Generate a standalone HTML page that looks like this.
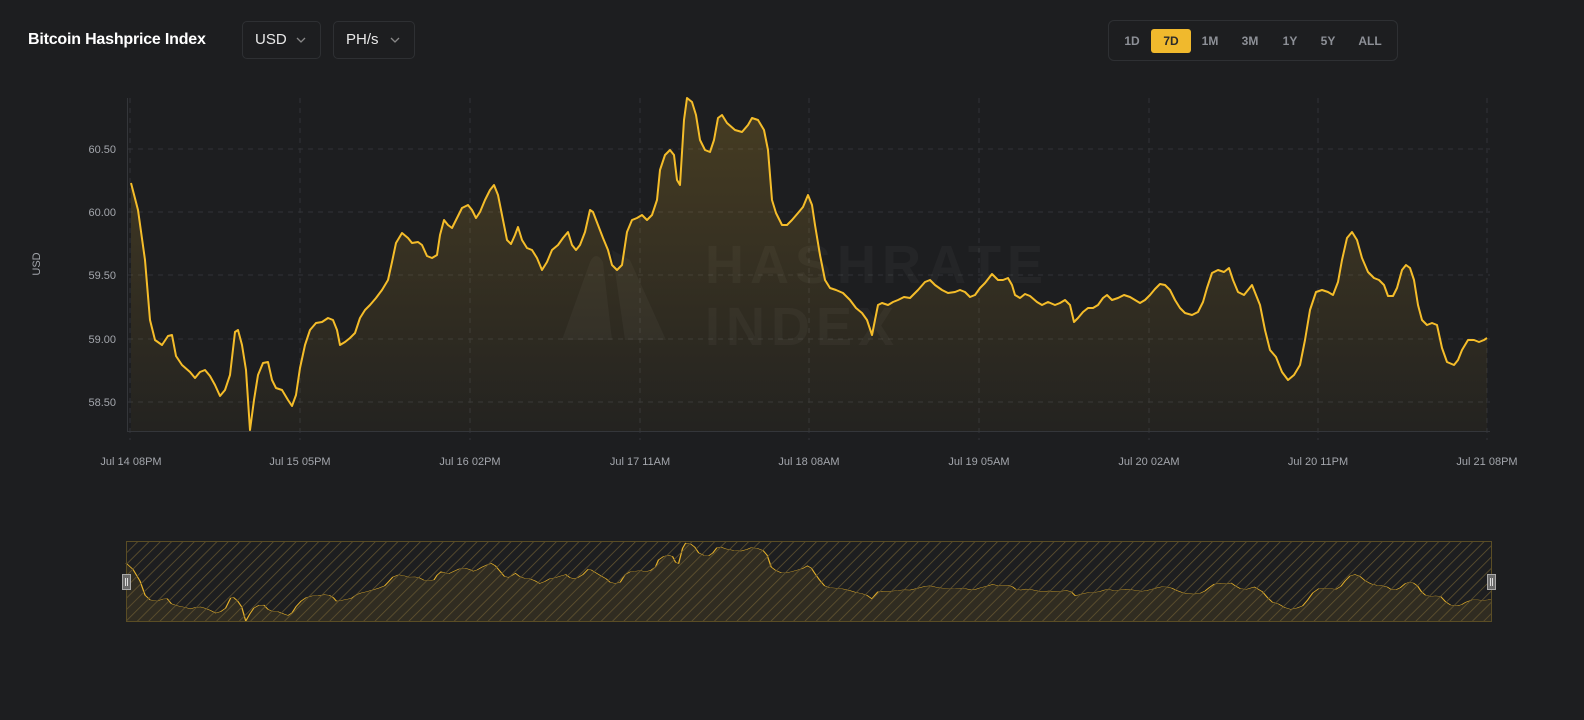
<!DOCTYPE html>
<html><head><meta charset="utf-8"><style>
body{margin:0;background:#1d1e20;width:1584px;height:720px;overflow:hidden;font-family:"Liberation Sans",sans-serif;color:#fff;position:relative}
.title{position:absolute;left:28px;top:31px;font-size:16px;font-weight:bold;letter-spacing:-0.2px}
.dd{position:absolute;top:21px;height:38px;border:1px solid #2e3033;border-radius:5px;box-sizing:border-box;font-size:15px;color:#e8e8e8;line-height:36px;padding-left:12px}
.dd svg{position:absolute;top:15px}
.tabs{position:absolute;left:1108px;top:20px;width:290px;height:41px;border:1px solid #2e3033;border-radius:6px;box-sizing:border-box}
.tabs span{position:absolute;top:8px;height:24px;line-height:24px;font-size:12px;font-weight:bold;color:#8d9097;text-align:center}
.tabs span.on{background:#f0b92d;color:#2a2a2a;border-radius:3px;width:40px}
</style></head><body>
<div class="title">Bitcoin Hashprice Index</div>
<div class="dd" style="left:242px;width:79px">USD<svg style="left:53px" width="10" height="6"><path d="M1 1L5 5L9 1" stroke="#888" fill="none" stroke-width="1.3"/></svg></div>
<div class="dd" style="left:333px;width:82px">PH/s<svg style="left:56px" width="10" height="6"><path d="M1 1L5 5L9 1" stroke="#888" fill="none" stroke-width="1.3"/></svg></div>
<div class="tabs">
<span style="left:12px;width:22px">1D</span>
<span class="on" style="left:42px">7D</span>
<span style="left:88px;width:26px">1M</span>
<span style="left:128px;width:26px">3M</span>
<span style="left:170px;width:22px">1Y</span>
<span style="left:207px;width:24px">5Y</span>
<span style="left:247px;width:28px">ALL</span>
</div>
<svg width="1584" height="720" style="position:absolute;left:0;top:0" font-family="Liberation Sans, sans-serif">
<defs>
<linearGradient id="g" x1="0" y1="0" x2="0" y2="1"><stop offset="0" stop-color="#f0b92d" stop-opacity="0.2"/><stop offset="1" stop-color="#f0b92d" stop-opacity="0.03"/></linearGradient>
<pattern id="h" width="8" height="8" patternUnits="userSpaceOnUse" patternTransform="rotate(45)"><line x1="0" y1="0" x2="0" y2="8" stroke="#655630" stroke-width="1.5"/></pattern>
<path id="ln" d="M131,183L138,210L145,260L150,320L155,340L162,345L168,336L172,335L176,356L182,365L190,372L195,378L200,372L205,370L210,376L215,385L220,396L225,390L230,375L235,332L238,330L242,345L246,370L250,430L254,400L258,375L263,363L268,362L272,380L276,388L282,390L288,400L292,406L296,395L300,368L305,345L310,330L316,323L322,322L328,318L333,320L337,330L340,345L345,342L350,338L355,333L360,318L365,310L370,305L376,298L382,290L388,280L392,262L396,243L402,233L408,238L412,243L418,242L422,245L427,256L432,258L437,255L440,235L444,220L448,225L452,228L457,218L462,208L468,205L472,210L476,218L480,212L485,200L490,190L494,185L498,195L502,215L507,240L511,244L515,235L518,227L522,240L527,248L532,250L537,258L542,270L547,262L552,250L558,245L563,238L568,232L572,245L576,250L580,245L585,232L590,210L593,212L598,225L603,238L608,250L612,265L617,270L622,265L627,232L632,220L637,218L642,215L647,220L652,215L657,200L660,170L665,155L670,150L674,155L677,180L680,185L684,120L687,98L692,102L696,115L700,140L705,150L710,152L714,140L718,118L722,115L727,123L735,130L742,132L748,125L752,118L758,120L764,130L768,150L772,200L776,213L782,225L787,225L792,220L798,213L803,207L808,195L812,205L815,225L820,255L825,280L830,288L836,290L843,293L850,300L856,308L862,313L867,320L872,335L875,320L878,305L882,303L888,305L893,302L898,300L904,297L910,298L918,290L925,282L930,280L935,285L942,290L948,293L955,292L960,290L965,292L970,297L975,295L980,288L985,283L992,274L998,280L1003,280L1008,278L1012,285L1015,295L1020,298L1025,294L1030,296L1037,302L1042,305L1048,302L1055,305L1060,303L1065,300L1070,305L1074,322L1078,318L1083,312L1088,308L1093,308L1098,305L1103,298L1107,295L1112,300L1118,298L1124,295L1130,297L1135,300L1140,303L1145,300L1150,295L1155,289L1160,284L1165,285L1170,290L1175,300L1180,308L1185,313L1192,315L1198,312L1203,302L1207,288L1212,273L1218,270L1224,272L1229,268L1233,280L1238,292L1244,295L1248,290L1252,285L1256,295L1260,305L1265,330L1270,350L1276,357L1282,372L1288,380L1294,375L1300,365L1305,340L1310,310L1316,292L1322,290L1328,292L1333,295L1338,282L1342,260L1347,238L1352,232L1357,240L1362,258L1368,272L1374,278L1379,280L1384,285L1388,296L1393,296L1397,288L1402,270L1406,265L1410,268L1414,280L1418,305L1422,320L1427,325L1432,323L1437,325L1442,348L1447,362L1454,365L1458,360L1462,350L1468,340L1474,340L1479,342L1484,340L1487,338"/>
<path id="ar" d="M131,183L138,210L145,260L150,320L155,340L162,345L168,336L172,335L176,356L182,365L190,372L195,378L200,372L205,370L210,376L215,385L220,396L225,390L230,375L235,332L238,330L242,345L246,370L250,430L254,400L258,375L263,363L268,362L272,380L276,388L282,390L288,400L292,406L296,395L300,368L305,345L310,330L316,323L322,322L328,318L333,320L337,330L340,345L345,342L350,338L355,333L360,318L365,310L370,305L376,298L382,290L388,280L392,262L396,243L402,233L408,238L412,243L418,242L422,245L427,256L432,258L437,255L440,235L444,220L448,225L452,228L457,218L462,208L468,205L472,210L476,218L480,212L485,200L490,190L494,185L498,195L502,215L507,240L511,244L515,235L518,227L522,240L527,248L532,250L537,258L542,270L547,262L552,250L558,245L563,238L568,232L572,245L576,250L580,245L585,232L590,210L593,212L598,225L603,238L608,250L612,265L617,270L622,265L627,232L632,220L637,218L642,215L647,220L652,215L657,200L660,170L665,155L670,150L674,155L677,180L680,185L684,120L687,98L692,102L696,115L700,140L705,150L710,152L714,140L718,118L722,115L727,123L735,130L742,132L748,125L752,118L758,120L764,130L768,150L772,200L776,213L782,225L787,225L792,220L798,213L803,207L808,195L812,205L815,225L820,255L825,280L830,288L836,290L843,293L850,300L856,308L862,313L867,320L872,335L875,320L878,305L882,303L888,305L893,302L898,300L904,297L910,298L918,290L925,282L930,280L935,285L942,290L948,293L955,292L960,290L965,292L970,297L975,295L980,288L985,283L992,274L998,280L1003,280L1008,278L1012,285L1015,295L1020,298L1025,294L1030,296L1037,302L1042,305L1048,302L1055,305L1060,303L1065,300L1070,305L1074,322L1078,318L1083,312L1088,308L1093,308L1098,305L1103,298L1107,295L1112,300L1118,298L1124,295L1130,297L1135,300L1140,303L1145,300L1150,295L1155,289L1160,284L1165,285L1170,290L1175,300L1180,308L1185,313L1192,315L1198,312L1203,302L1207,288L1212,273L1218,270L1224,272L1229,268L1233,280L1238,292L1244,295L1248,290L1252,285L1256,295L1260,305L1265,330L1270,350L1276,357L1282,372L1288,380L1294,375L1300,365L1305,340L1310,310L1316,292L1322,290L1328,292L1333,295L1338,282L1342,260L1347,238L1352,232L1357,240L1362,258L1368,272L1374,278L1379,280L1384,285L1388,296L1393,296L1397,288L1402,270L1406,265L1410,268L1414,280L1418,305L1422,320L1427,325L1432,323L1437,325L1442,348L1447,362L1454,365L1458,360L1462,350L1468,340L1474,340L1479,342L1484,340L1487,338L1487,431L131,431Z"/>
</defs>
<g stroke="#313337" stroke-dasharray="5,5" stroke-width="1">
<line x1="128" y1="149" x2="1490" y2="149"/><line x1="128" y1="212" x2="1490" y2="212"/><line x1="128" y1="275" x2="1490" y2="275"/><line x1="128" y1="339" x2="1490" y2="339"/><line x1="128" y1="402" x2="1490" y2="402"/>
<line x1="130" y1="98" x2="130" y2="440"/><line x1="300" y1="98" x2="300" y2="440"/><line x1="470" y1="98" x2="470" y2="440"/><line x1="640" y1="98" x2="640" y2="440"/><line x1="809" y1="98" x2="809" y2="440"/><line x1="979" y1="98" x2="979" y2="440"/><line x1="1149" y1="98" x2="1149" y2="440"/><line x1="1318" y1="98" x2="1318" y2="440"/><line x1="1487" y1="98" x2="1487" y2="440"/>
</g>
<line x1="127.5" y1="98" x2="127.5" y2="431" stroke="#34363a"/>
<line x1="127" y1="431.5" x2="1490" y2="431.5" stroke="#34363a"/>
<use href="#ar" fill="url(#g)"/>
<g fill="#ffffff" fill-opacity="0.035">
<path d="M562,340L590,262Q596,250 603,262L612,340Z"/><path d="M612,250L630,260L666,340L625,340Z"/>
<text x="705" y="283" font-size="54" font-weight="bold" letter-spacing="6">HASHRATE</text>
<text x="705" y="345" font-size="54" font-weight="bold" letter-spacing="6">INDEX</text>
</g>
<use href="#ln" fill="none" stroke="#f5bd2a" stroke-width="2" stroke-linejoin="round"/>
<g fill="#a3a6ac" font-size="11" text-anchor="end">
<text x="116" y="153">60.50</text><text x="116" y="216">60.00</text><text x="116" y="279">59.50</text><text x="116" y="343">59.00</text><text x="116" y="406">58.50</text>
</g>
<text transform="translate(40,264) rotate(-90)" fill="#a3a6ac" font-size="11" text-anchor="middle">USD</text>
<g fill="#a3a6ac" font-size="11" text-anchor="middle">
<text x="131" y="465">Jul 14 08PM</text><text x="300" y="465">Jul 15 05PM</text><text x="470" y="465">Jul 16 02PM</text><text x="640" y="465">Jul 17 11AM</text><text x="809" y="465">Jul 18 08AM</text><text x="979" y="465">Jul 19 05AM</text><text x="1149" y="465">Jul 20 02AM</text><text x="1318" y="465">Jul 20 11PM</text><text x="1487" y="465">Jul 21 08PM</text>
</g>
<g transform="translate(-5.9,520) scale(1.0066,0.235)">
<use href="#ar" fill="#f0b92d" fill-opacity="0.09"/>
<use href="#ln" fill="none" stroke="#e6b12a" stroke-width="1.3" vector-effect="non-scaling-stroke"/>
</g>
<rect x="126.5" y="541.5" width="1365" height="80" fill="url(#h)" stroke="#5a4d25"/>
<rect x="122.5" y="574.5" width="8" height="15" fill="#6b6b6b" stroke="#aaa"/>
<line x1="125.5" y1="578" x2="125.5" y2="586" stroke="#ddd"/><line x1="127.5" y1="578" x2="127.5" y2="586" stroke="#ddd"/>
<rect x="1487.5" y="574.5" width="8" height="15" fill="#6b6b6b" stroke="#aaa"/>
<line x1="1490.5" y1="578" x2="1490.5" y2="586" stroke="#ddd"/><line x1="1492.5" y1="578" x2="1492.5" y2="586" stroke="#ddd"/>
</svg>
</body></html>
